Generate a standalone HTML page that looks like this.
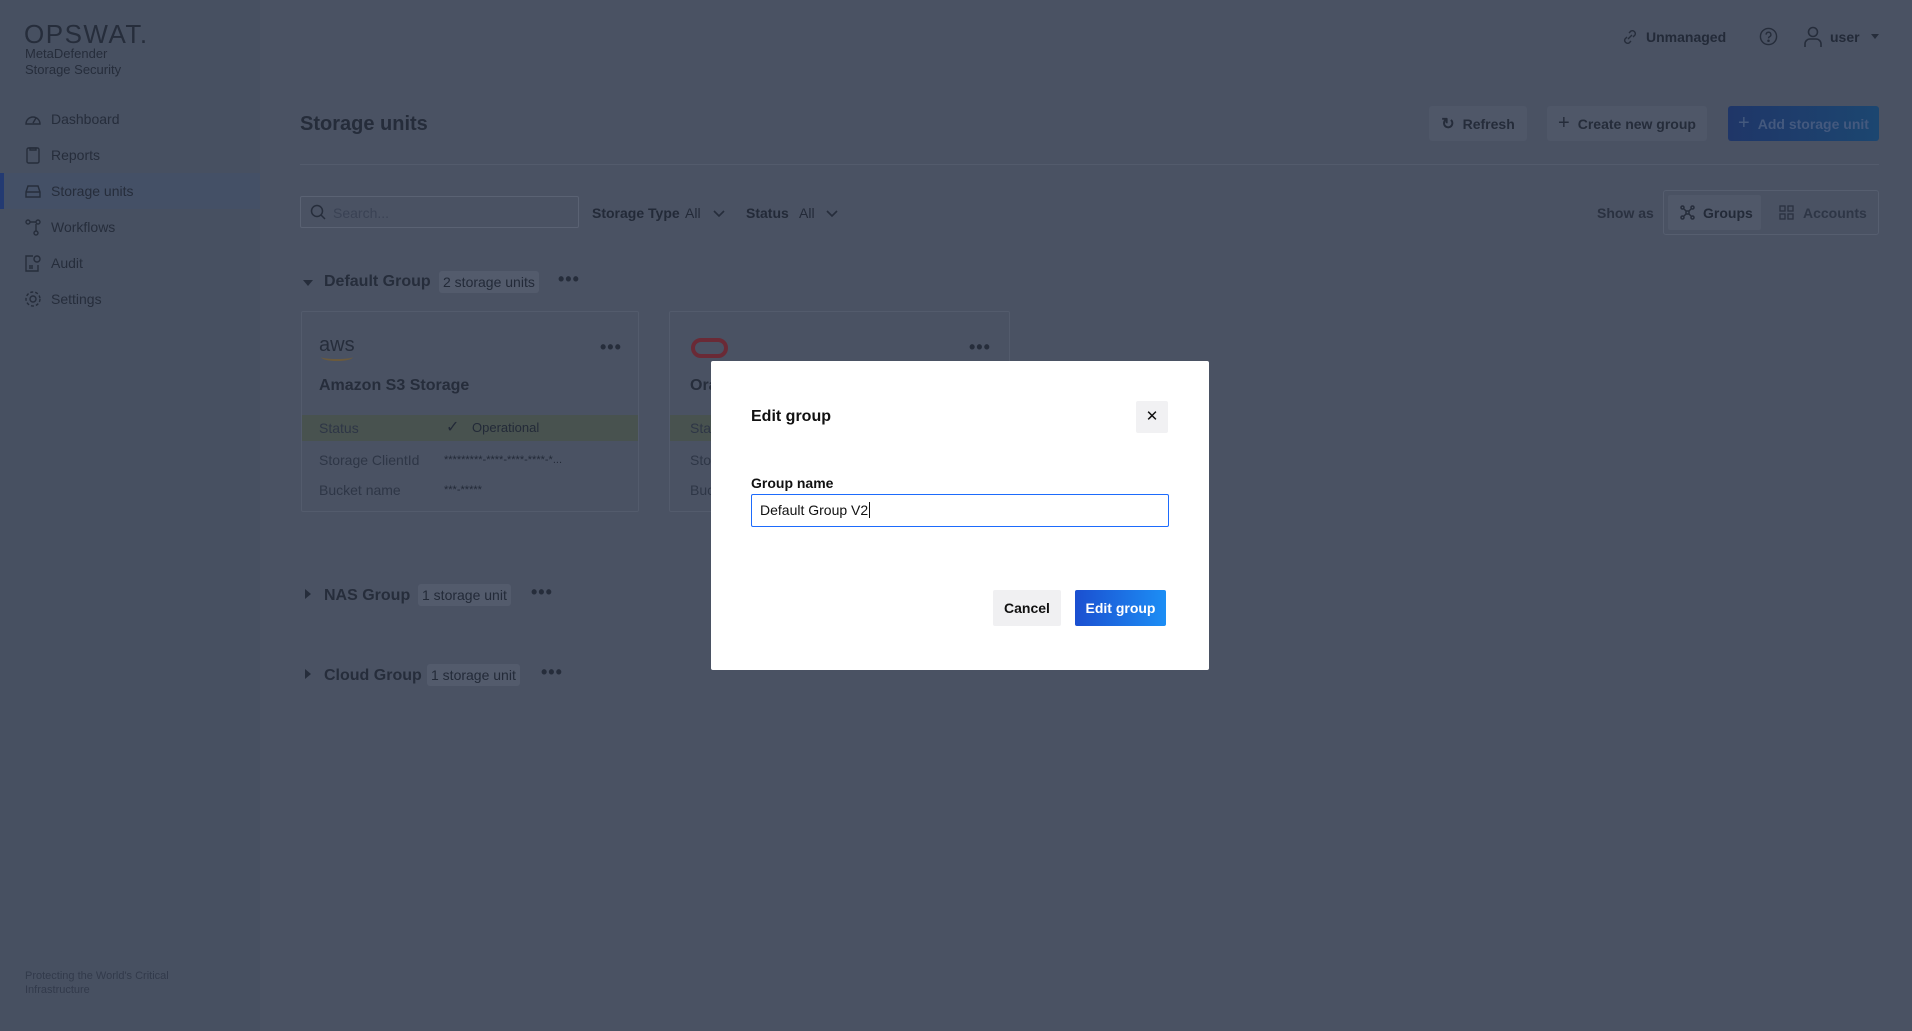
<!DOCTYPE html>
<html><head><meta charset="utf-8"><style>
*{box-sizing:border-box;margin:0;padding:0}
body{width:1912px;height:1031px;background:#4a5263;font-family:"Liberation Sans",sans-serif;color:#232a38;position:relative;overflow:hidden}
.a{position:absolute;white-space:nowrap}
.side{position:absolute;left:0;top:0;width:260px;height:1031px;background:#475061}
.nav{font-size:14px;color:#262d3b}
.ic{position:absolute;width:18px;height:18px}
.btn{position:absolute;height:35px;border-radius:3px;background:#4f5768;font-size:14px;font-weight:bold;display:flex;align-items:center;justify-content:center;gap:8px;color:#252c3a}
.badge{position:absolute;height:22px;background:#535b6c;border-radius:3px;font-size:14px;line-height:22px;padding:0 4px;color:#232a38}
.dots{position:absolute;font-size:18px;font-weight:bold;letter-spacing:1px;color:#262d3b}
.card{position:absolute;border:1px solid #535b6c;border-radius:2px;background:#4a5263}
.lbl{color:#2e3646;font-size:14px}
</style></head><body>
<div class="side"></div>
<div class="a" style="left:24px;top:19px;font-size:26px;letter-spacing:1.5px;color:#262d3b;font-weight:300">OPSWAT.</div>
<div class="a" style="left:25px;top:46px;font-size:13px;line-height:16px;color:#262d3b">MetaDefender<br>Storage Security</div>
<div class="a" style="left:0;top:173px;width:260px;height:36px;background:#445066"></div>
<div class="a" style="left:0;top:173px;width:4px;height:36px;background:#233a72"></div>
<svg class="ic" style="left:24px;top:110px" viewBox="0 0 18 18" fill="none" stroke="#262d3b" stroke-width="1.4"><path d="M2 14a7 7 0 0 1 14 0z"/><path d="M9 13l3-5"/></svg>
<div class="a nav" style="left:51px;top:111px">Dashboard</div>
<svg class="ic" style="left:24px;top:146px" viewBox="0 0 18 18" fill="none" stroke="#262d3b" stroke-width="1.4"><rect x="3" y="2" width="12" height="15" rx="1.5"/><path d="M6 2h6v2H6z"/></svg>
<div class="a nav" style="left:51px;top:183px">Storage units</div>
<div class="a nav" style="left:51px;top:147px">Reports</div>
<svg class="ic" style="left:24px;top:182px" viewBox="0 0 18 18" fill="none" stroke="#262d3b" stroke-width="1.4"><path d="M2 10l2-6h10l2 6v5H2z M2 10h14"/></svg>
<svg class="ic" style="left:24px;top:218px" viewBox="0 0 18 18" fill="none" stroke="#262d3b" stroke-width="1.4"><circle cx="4" cy="4" r="2"/><circle cx="14" cy="4" r="2"/><circle cx="12" cy="15" r="2"/><path d="M6 4h6M12 6v7"/></svg>
<div class="a nav" style="left:51px;top:219px">Workflows</div>
<svg class="ic" style="left:24px;top:254px" viewBox="0 0 18 18" fill="none" stroke="#262d3b" stroke-width="1.4"><path d="M9 2H2v15h12v-6"/><circle cx="13" cy="5" r="3"/><path d="M5 12h4M5 14h4"/></svg>
<div class="a nav" style="left:51px;top:255px">Audit</div>
<svg class="ic" style="left:24px;top:290px" viewBox="0 0 18 18" fill="none" stroke="#262d3b" stroke-width="1.4"><circle cx="9" cy="9" r="3"/><circle cx="9" cy="9" r="7" stroke-dasharray="3 2"/></svg>
<div class="a nav" style="left:51px;top:291px">Settings</div>
<div class="a" style="left:25px;top:969px;font-size:11px;line-height:14px;color:#323a4b">Protecting the World's Critical<br>Infrastructure</div>

<!-- header -->
<svg class="a" style="left:1622px;top:29px" width="16" height="16" viewBox="0 0 16 16" fill="none" stroke="#262d3b" stroke-width="1.4"><path d="M7 4l2-2a3 3 0 0 1 4 4l-2 2M9 12l-2 2a3 3 0 0 1-4-4l2-2M6 10l4-4"/></svg>
<div class="a" style="left:1646px;top:29px;font-size:14px;font-weight:bold">Unmanaged</div>
<svg class="a" style="left:1759px;top:27px" width="19" height="19" viewBox="0 0 20 20" fill="none" stroke="#262d3b" stroke-width="1.5"><circle cx="10" cy="10" r="8.5"/><path d="M7.5 8a2.5 2.5 0 1 1 3.5 2.3c-.8.4-1 1-1 1.7"/><circle cx="10" cy="14.5" r=".6" fill="#262d3b"/></svg>
<svg class="a" style="left:1803px;top:26px" width="20" height="22" viewBox="0 0 20 22" fill="none" stroke="#262d3b" stroke-width="1.6"><circle cx="10" cy="6" r="4.5"/><path d="M2 21v-3a5 5 0 0 1 5-5h6a5 5 0 0 1 5 5v3"/></svg>
<div class="a" style="left:1830px;top:29px;font-size:14px;font-weight:bold">user</div>
<div class="a" style="left:1871px;top:34px;width:0;height:0;border-left:4px solid transparent;border-right:4px solid transparent;border-top:5px solid #262d3b"></div>

<div class="a" style="left:300px;top:113px;font-size:20px;font-weight:bold;color:#252c3a">Storage units</div>
<div class="btn" style="left:1429px;top:106px;width:98px"><span style="font-size:16px">↻</span>Refresh</div>
<div class="btn" style="left:1547px;top:106px;width:160px"><span style="font-size:20px;font-weight:normal">+</span>Create new group</div>
<div class="btn" style="left:1728px;top:106px;width:151px;background:linear-gradient(90deg,#1f3668,#1c4670);color:#44597e"><span style="font-size:20px;font-weight:normal">+</span>Add storage unit</div>
<div class="a" style="left:300px;top:164px;width:1579px;height:1px;background:#535b6c"></div>

<div class="a" style="left:300px;top:196px;width:279px;height:32px;border:1px solid #5a6273;border-radius:2px"></div>
<svg class="a" style="left:310px;top:204px" width="16" height="16" viewBox="0 0 16 16" fill="none" stroke="#262d3b" stroke-width="1.5"><circle cx="7" cy="7" r="5.5"/><path d="M11 11l4 4"/></svg>
<div class="a" style="left:333px;top:205px;font-size:14px;color:#3a4254">Search...</div>
<div class="a" style="left:592px;top:205px;font-size:14px;font-weight:bold">Storage Type</div>
<div class="a" style="left:685px;top:205px;font-size:14px">All</div>
<svg class="a" style="left:712px;top:208px" width="14" height="10" viewBox="0 0 14 10" fill="none" stroke="#262d3b" stroke-width="1.6"><path d="M2 3l5 5 5-5"/></svg>
<div class="a" style="left:746px;top:205px;font-size:14px;font-weight:bold">Status</div>
<div class="a" style="left:799px;top:205px;font-size:14px">All</div>
<svg class="a" style="left:825px;top:208px" width="14" height="10" viewBox="0 0 14 10" fill="none" stroke="#262d3b" stroke-width="1.6"><path d="M2 3l5 5 5-5"/></svg>
<div class="a" style="left:1597px;top:205px;font-size:14px;font-weight:bold;color:#2a3140">Show as</div>
<div class="a" style="left:1663px;top:190px;width:216px;height:45px;border:1px solid #565e6f;border-radius:3px"></div>
<div class="a" style="left:1668px;top:195px;width:93px;height:35px;background:#505869;border-radius:2px"></div>
<svg class="a" style="left:1680px;top:205px" width="15" height="15" viewBox="0 0 15 15" fill="none" stroke="#262d3b" stroke-width="1.5"><circle cx="2.5" cy="2.5" r="1.5"/><circle cx="12.5" cy="2.5" r="1.5"/><circle cx="2.5" cy="12.5" r="1.5"/><circle cx="12.5" cy="12.5" r="1.5"/><path d="M4 4l2 2M11 4l-2 2M4 11l2-2M11 11l-2-2M6 6h3v3H6z"/></svg>
<div class="a" style="left:1703px;top:205px;font-size:14px;font-weight:bold">Groups</div>
<svg class="a" style="left:1779px;top:205px" width="15" height="15" viewBox="0 0 15 15" fill="none" stroke="#2a3140" stroke-width="1.3"><rect x="1" y="1" width="5" height="5"/><rect x="9" y="1" width="5" height="5"/><rect x="1" y="9" width="5" height="5"/><rect x="9" y="9" width="5" height="5"/></svg>
<div class="a" style="left:1803px;top:205px;font-size:14px;font-weight:bold;color:#2e3646">Accounts</div>

<!-- groups -->
<div class="a" style="left:303px;top:280px;border-left:5px solid transparent;border-right:5px solid transparent;border-top:6px solid #262d3b"></div>
<div class="a" style="left:324px;top:273px;font-size:16px;font-weight:bold;color:#262d3b">Default Group</div>
<div class="badge" style="left:439px;top:271px">2 storage units</div>
<div class="dots" style="left:558px;top:269px">•••</div>

<div class="card" style="left:301px;top:311px;width:338px;height:201px"></div>
<div class="a" style="left:319px;top:334px;font-size:20px;color:#262d3b">aws</div>
<div class="a" style="left:321px;top:353px;width:32px;height:8px;border-bottom:2px solid #6b5a3c;border-radius:0 0 50% 50%"></div>
<div class="dots" style="left:600px;top:337px">•••</div>
<div class="a" style="left:319px;top:377px;font-size:16px;font-weight:bold;color:#262d3b">Amazon S3 Storage</div>
<div class="a" style="left:302px;top:415px;width:336px;height:26px;background:#48524f"></div>
<div class="a lbl" style="left:319px;top:420px">Status</div>
<div class="a" style="left:446px;top:417px;font-size:16px;color:#232a38">✓</div>
<div class="a" style="left:472px;top:420px;font-size:13px">Operational</div>
<div class="a lbl" style="left:319px;top:452px">Storage ClientId</div>
<div class="a" style="left:444px;top:454px;font-size:11px">*********-****-****-****-*...</div>
<div class="a lbl" style="left:319px;top:482px">Bucket name</div>
<div class="a" style="left:444px;top:484px;font-size:11px">***-*****</div>

<div class="card" style="left:669px;top:311px;width:341px;height:201px"></div>
<div class="a" style="left:691px;top:338px;width:37px;height:20px;border:4px solid #6a2a36;border-radius:10px"></div>
<div class="dots" style="left:969px;top:337px">•••</div>
<div class="a" style="left:690px;top:377px;font-size:16px;font-weight:bold;color:#262d3b">Ora</div>
<div class="a" style="left:670px;top:415px;width:60px;height:26px;background:#48524f"></div>
<div class="a lbl" style="left:690px;top:420px">Sta</div>
<div class="a lbl" style="left:690px;top:452px">Sto</div>
<div class="a lbl" style="left:690px;top:482px">Buc</div>

<div class="a" style="left:305px;top:589px;border-top:5px solid transparent;border-bottom:5px solid transparent;border-left:6px solid #262d3b"></div>
<div class="a" style="left:324px;top:587px;font-size:16px;font-weight:bold;color:#262d3b">NAS Group</div>
<div class="badge" style="left:418px;top:584px">1 storage unit</div>
<div class="dots" style="left:531px;top:582px">•••</div>
<div class="a" style="left:305px;top:669px;border-top:5px solid transparent;border-bottom:5px solid transparent;border-left:6px solid #262d3b"></div>
<div class="a" style="left:324px;top:667px;font-size:16px;font-weight:bold;color:#262d3b">Cloud Group</div>
<div class="badge" style="left:427px;top:664px">1 storage unit</div>
<div class="dots" style="left:541px;top:662px">•••</div>

<!-- modal -->
<div class="a" style="left:711px;top:361px;width:498px;height:309px;background:#fff;border-radius:2px"></div>
<div class="a" style="left:751px;top:408px;font-size:16px;font-weight:bold;color:#111">Edit group</div>
<div class="a" style="left:1136px;top:401px;width:32px;height:32px;background:#f1f1f3;border-radius:2px;text-align:center;line-height:32px;font-size:15px;color:#111">✕</div>
<div class="a" style="left:751px;top:475px;font-size:14px;font-weight:bold;color:#111">Group name</div>
<div class="a" style="left:751px;top:494px;width:418px;height:33px;border:1px solid #1d6bfc;border-radius:2px;font-size:14px;line-height:31px;padding-left:8px;color:#111">Default Group V2<span style="border-left:1px solid #111;margin-left:1px"></span></div>
<div class="a" style="left:993px;top:590px;width:68px;height:36px;background:#f0f0f2;border-radius:2px;text-align:center;line-height:36px;font-size:14px;font-weight:bold;color:#111">Cancel</div>
<div class="a" style="left:1075px;top:590px;width:91px;height:36px;background:linear-gradient(90deg,#1b4fd0,#1c8ef5);border-radius:2px;text-align:center;line-height:36px;font-size:14px;font-weight:bold;color:#fff">Edit group</div>
</body></html>
